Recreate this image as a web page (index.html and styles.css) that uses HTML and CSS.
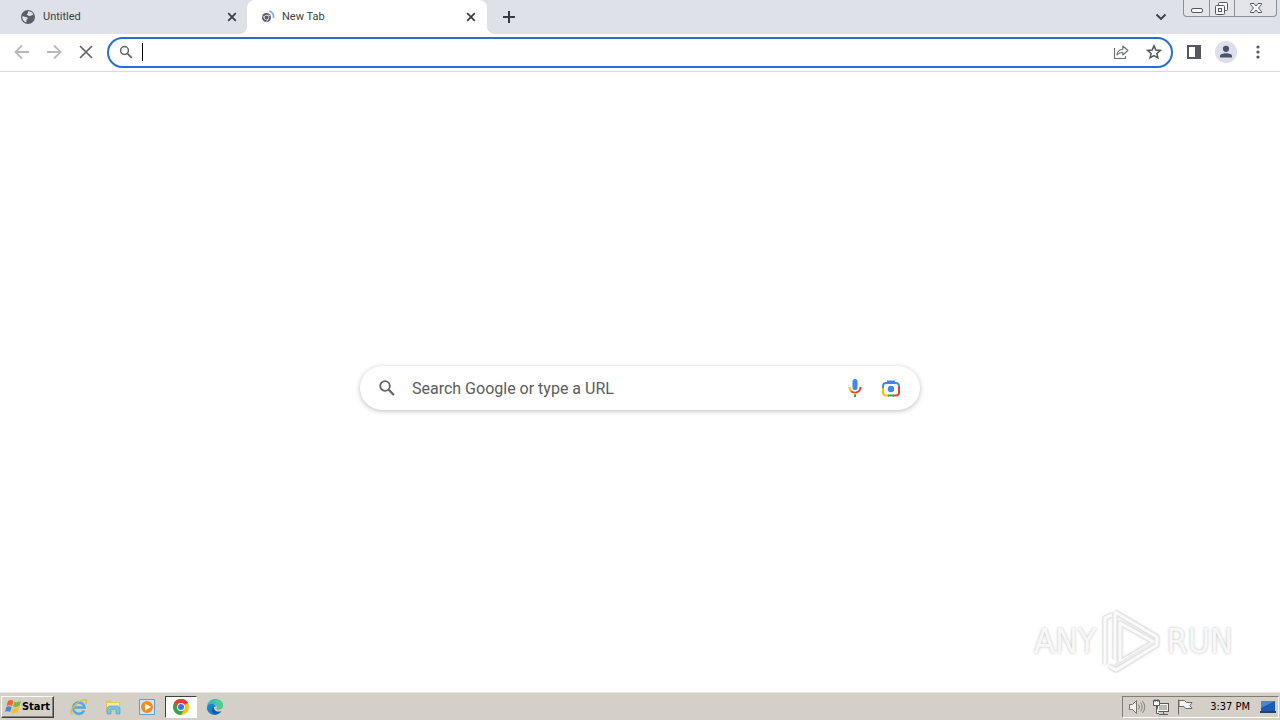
FILE: index.html
```html
<!DOCTYPE html>
<html lang="en">
<head>
<meta charset="utf-8">
<title>New Tab</title>
<link rel="stylesheet" href="styles.css">
</head>
<body>
<header class="tabstrip">
  <div class="tab">
    <svg class="favicon" width="16" height="16" viewBox="0 0 16 16"><circle cx="8" cy="8" r="7" fill="#5a5e66"/><path d="M2.2 7.2C4 7 5 8 6.6 8.2 8.4 8.5 8 10 6.6 10.4L6.3 13.3C3.8 12.8 2 10.5 2.2 7.2ZM8 2.2C10 2 12.4 3.2 13.4 5.4 12.3 6.5 10.7 6.3 9.7 7.2 8.6 6.7 7.2 6.6 6.8 5.6 7 4.7 8.3 4.9 8 2.2Z" fill="#dee1e8"/></svg>
    <span class="tab-title">Untitled</span>
    <button class="tab-close" aria-label="Close Untitled"><svg width="10" height="10" viewBox="0 0 10 10"><path d="M1.2 1.2L8.8 8.8M8.8 1.2L1.2 8.8" stroke="#3c4043" stroke-width="1.8"/></svg></button>
  </div>
  <div class="tab tab-active">
    <svg class="favicon" width="16" height="16" viewBox="0 0 16 16"><circle cx="6.500" cy="8.500" r="4.500" fill="#55595f"/><circle cx="6.500" cy="8.500" r="2.300" fill="none" stroke="#e8e9eb" stroke-width=".8"/><path d="M6.500 6.300H10.500M4.600 9.600L2.800 6.800M8.500 9.700L6.500 13" stroke="#e8e9eb" stroke-width=".8"/><path d="M9.500 2C12.500 3 14 5.200 13.600 9" fill="none" stroke="#80aaf0" stroke-width="1.800"/></svg>
    <span class="tab-title">New Tab</span>
    <button class="tab-close" aria-label="Close New Tab"><svg width="10" height="10" viewBox="0 0 10 10"><path d="M1.2 1.2L8.800 8.800M8.800 1.200L1.200 8.800" stroke="#3c4043" stroke-width="1.800"/></svg></button>
  </div>
  <button class="new-tab" aria-label="New tab"><svg width="14" height="14" viewBox="0 0 14 14"><path d="M7 1V13M1 7H13" stroke="#36393f" stroke-width="2"/></svg></button>
  <button class="tab-search" aria-label="Search tabs"><svg width="12" height="8" viewBox="0 0 12 8"><path d="M1.500 1.500L6 6L10.500 1.500" fill="none" stroke="#3c4043" stroke-width="1.900"/></svg></button>
  <div class="window-controls">
    <button class="wc" aria-label="Minimize"><svg width="24" height="16" viewBox="0 0 24 16"><rect x="6.500" y="8.500" width="11" height="4" rx="1.500" fill="#f8f8fa" stroke="#55595f"/></svg></button>
    <button class="wc" aria-label="Restore"><svg width="24" height="16" viewBox="0 0 24 16"><g fill="#f4f5f7" stroke="#55595f"><rect x="8.500" y="2.500" width="9" height="8" rx="1"/><rect x="5.500" y="5.500" width="9" height="9" rx="1"/><rect x="8.500" y="8.500" width="3" height="3"/></g></svg></button>
    <button class="wc wc-close" aria-label="Close"><svg width="40" height="16" viewBox="0 0 40 16"><path d="M14.500 3.500H18L20 6L22 3.500H25.500V4.500L22.500 8L25.500 11.500V12.500H22L20 10L18 12.500H14.500V11.500L17.500 8L14.500 4.500Z" fill="#f8f8fa" stroke="#55595f"/></svg></button>
  </div>
</header>
<nav class="toolbar">
  <button class="tool" aria-label="Back"><svg width="16" height="16" viewBox="0 0 16 16"><path d="M15 8H2M8 1.500L1.500 8L8 14.500" fill="none" stroke="#b7b9bc" stroke-width="1.800"/></svg></button>
  <button class="tool" aria-label="Forward"><svg width="16" height="16" viewBox="0 0 16 16"><path d="M1 8H14M8 1.500L14.500 8L8 14.500" fill="none" stroke="#b7b9bc" stroke-width="1.800"/></svg></button>
  <button class="tool" aria-label="Stop loading"><svg width="16" height="16" viewBox="0 0 16 16"><path d="M2 2L14 14M14 2L2 14" stroke="#5f6368" stroke-width="1.700"/></svg></button>
  <div class="omnibox">
    <svg width="14" height="14" viewBox="0 0 14 14"><circle cx="5.500" cy="5.500" r="3.900" fill="none" stroke="#5f6368" stroke-width="1.500"/><path d="M8.300 8.300L12.800 12.800" stroke="#5f6368" stroke-width="1.700"/></svg>
    <span class="caret"></span>
    <input class="address" type="text" aria-label="Address and search bar">
    <button class="tool" aria-label="Share"><svg width="16" height="16" viewBox="0 0 16 16"><path d="M1.500 4V14.500H12.500V12M4 11C4.500 7.500 6.500 5.500 9.800 5.300V2L15 6.500L9.800 11V8.200C7.500 8.200 5.800 8.900 4 11Z" fill="none" stroke="#6b6f75" stroke-width="1.100" stroke-linejoin="round"/></svg></button>
    <button class="tool" aria-label="Bookmark"><svg width="16" height="16" viewBox="0 0 16 16"><path d="M8 1.800L9.800 6L14.300 6.400L10.900 9.400L11.900 13.800L8 11.500L4.100 13.800L5.100 9.400L1.700 6.400L6.200 6Z" fill="none" stroke="#50545a" stroke-width="1.500"/></svg></button>
  </div>
  <button class="tool" aria-label="Side panel"><svg width="16" height="16" viewBox="0 0 16 16"><path d="M1 1H15V15H1ZM3 3V13H9V3Z" fill="#55585d" fill-rule="evenodd"/></svg></button>
  <button class="tool" aria-label="Profile"><svg width="22" height="22" viewBox="0 0 22 22"><circle cx="11" cy="11" r="11" fill="#dce0e6"/><circle cx="11" cy="7.800" r="3.100" fill="#49536b"/><path d="M5 16.500V15C5 11.200 17 11.200 17 15V16.500Z" fill="#49536b"/></svg></button>
  <button class="tool" aria-label="Menu"><svg width="16" height="16" viewBox="0 0 16 16"><g fill="#55585d"><circle cx="8" cy="3" r="1.600"/><circle cx="8" cy="8" r="1.600"/><circle cx="8" cy="13" r="1.600"/></g></svg></button>
</nav>
<main class="page">
  <form class="search">
    <svg width="18" height="18" viewBox="0 0 18 18"><circle cx="7" cy="7" r="4.800" fill="none" stroke="#5f6368" stroke-width="1.800"/><path d="M10.500 10.500L16 16" stroke="#5f6368" stroke-width="2.200"/></svg>
    <input class="search-input" type="text" placeholder="Search Google or type a URL" aria-label="Search Google or type a URL">
    <button class="search-icon" type="button" aria-label="Search by voice"><svg width="20" height="20" viewBox="0 0 20 20"><rect x="7.500" y="1" width="5" height="11" rx="2.500" fill="#4285f4"/><path d="M4.500 9C4.500 11.500 5.500 13 7 14" fill="none" stroke="#fbbc04" stroke-width="1.900"/><path d="M6.300 13.300C10 16.300 15.500 14.200 15.500 9" fill="none" stroke="#ea4335" stroke-width="1.900"/><path d="M10 15V19" stroke="#34a853" stroke-width="2"/><path d="M10 15V16.500" stroke="#fbbc04" stroke-width="2"/></svg></button>
    <button class="search-icon" type="button" aria-label="Search by image"><svg width="20" height="20" viewBox="0 0 20 20"><g fill="none" stroke-width="2"><path d="M2 11V8Q2 5 5 5H15Q17.500 5 18 8" stroke="#4285f4"/><path d="M6 3.500H14" stroke="#4285f4"/><path d="M2 10V14.500Q2 17.500 5 17.500H8" stroke="#fbbc04"/><path d="M7 17.500H13" stroke="#34a853"/><path d="M12 17.500H15Q18 17.500 18 14.500V8" stroke="#ea4335"/></g><circle cx="10" cy="11" r="3.200" fill="#4285f4"/></svg></button>
  </form>
  <div class="watermark">
    <span>ANY</span>
    <svg width="60" height="64" viewBox="0 0 60 64"><g fill="none" stroke-linejoin="round"><path d="M4 55V9L11 6M14 3L56 28V36L15 61L8 57M14 3V50M19 14L53 33L19 53Z" stroke="#e2e2e2" stroke-width="5"/><path d="M4 55V9L11 6M14 3L56 28V36L15 61L8 57M14 3V50M19 14L53 33L19 53Z" stroke="#fafafa" stroke-width="3"/><path d="M13 57L54 33" stroke="#ececec" stroke-width="2"/></g></svg>
    <span>RUN</span>
  </div>
</main>
<footer class="taskbar">
  <button class="start"><svg width="17" height="16" viewBox="0 0 17 16"><path d="M3 2Q6 0 8.500 2L7 7Q4.500 5.500 1.500 7Z" fill="#ef6234"/><path d="M9.500 2.500Q12 4 16 2L14.500 7Q11 9 8 7.500Z" fill="#80b83c"/><path d="M1.300 8Q4 6.500 6.700 8L5.200 13Q2.500 11.500 0 13Z" fill="#4489cd"/><path d="M7.700 8.500Q10.500 10 14.200 8L12.800 13Q9.500 15 6.300 13.500Z" fill="#f5bd32"/></svg><span>Start</span></button>
  <div class="pins">
    <button class="pin" aria-label="Internet Explorer"><svg width="18" height="18" viewBox="0 0 18 18"><path d="M14 12.500A5.700 5.700 0 1 1 14.500 9.500H5" fill="none" stroke="#4badde" stroke-width="2.700"/><path d="M3 15.500C-1 17 1 11 5.500 6.500S16 .5 16.500 2.500 15.500 6 15.500 6" fill="none" stroke="#e2b838" stroke-width="1.300"/></svg></button>
    <button class="pin" aria-label="File Explorer"><svg width="18" height="18" viewBox="0 0 18 18"><path d="M2 2.500L7 2L8 4H16V14H2Z" fill="#e6c65f"/><path d="M3 5H15V13H3Z" fill="#fbeaa5"/><path d="M3 16V10L5 8H14L16 10V16H12V12H7V16Z" fill="#78c3e5" stroke="#4a9bc4" stroke-width=".6"/></svg></button>
    <button class="pin" aria-label="Media Player"><svg width="18" height="18" viewBox="0 0 18 18"><path d="M1.500 1.500H16.500V16.500H1.500Z" fill="#d4e5f4" stroke="#5aa0d4"/><circle cx="9" cy="9" r="6" fill="#f28b22"/><path d="M7 5.500L13 9L7 12.500Z" fill="#fff"/></svg></button>
    <button class="pin pin-active" aria-label="Google Chrome"><svg width="18" height="18" viewBox="0 0 18 18"><circle cx="9" cy="9" r="8" fill="#fbc116"/><path d="M9 9L2.100 5A8 8 0 0 1 15.900 5Z" fill="#e34133"/><path d="M9 9L2.100 5A8 8 0 0 0 9 17L12.500 11Z" fill="#2da94f"/><path d="M2.100 5L5.500 11L9 5.300H16A8 8 0 0 0 2.100 5" fill="#e34133"/><circle cx="9" cy="9" r="4" fill="#fff"/><circle cx="9" cy="9" r="3" fill="#3478e5"/></svg></button>
    <button class="pin" aria-label="Microsoft Edge"><svg width="18" height="18" viewBox="0 0 18 18"><path d="M1 9C1-1.500 17-1.500 17 7.500C17 11 13 12.500 10.500 11C12 8.500 9.500 5.500 6 6C3.500 6 1.500 7.500 1 9Z" fill="#37bfc0"/><path d="M10 2C15 2 17 5 17 7.500C17 11 13 12.500 10.500 11C12 7 11 4 7 3Z" fill="#4fcf84"/><path d="M1 9C2 5 9 4.500 10 8.500C7 8.500 6 12 8 14.500C9 16 11 16.500 12.500 16.200C6 19 0 14 1 9Z" fill="#1684cf"/><path d="M8 9C7.500 12 10.500 14.500 15.500 13.300C12 18.500 4 16 6 10.500Z" fill="#155aa4"/></svg></button>
  </div>
  <div class="tray">
    <svg width="18" height="18" viewBox="0 0 18 18"><path d="M1.500 6.500H4.500L8.500 2.500V15.500L4.500 11.500H1.500Z" fill="#f4f4f2" stroke="#74736f"/><path d="M10.500 6.500Q12.500 9 10.500 11.500M12.500 4.500Q16 9 12.500 13.500M14.500 3Q19 9 14.500 15" fill="none" stroke="#85837f"/></svg>
    <svg width="18" height="18" viewBox="0 0 18 18"><rect x="5.500" y="5.500" width="11" height="8" fill="#b9b9b6" stroke="#5b5a57"/><path d="M6.500 6.500H15.500V12.500H6.500Z" fill="none" stroke="#f5f5f3"/><path d="M7 16.500H16M11.500 14V16" stroke="#5b5a57"/><path d="M1.500 2.500H7.500V7.500H1.500ZM3 1V4M6 1V4M4.500 8V15.500H7" fill="#fff" stroke="#5b5a57"/></svg>
    <svg width="18" height="18" viewBox="0 0 18 18"><path d="M2.500 1.500V16.500M3 2.500H8.500L10.500 4.500H16L14 7.500L16 10.500H9.500L8 8.500H3Z" fill="#f4f4f2" stroke="#6d6b67"/></svg>
    <time class="clock">3:37 PM</time>
    <svg width="16" height="14" viewBox="0 0 16 14"><path d="M1 1H15V11H1Z" fill="#195bb5"/><path d="M1 1H15L1 8Z" fill="#4488d1"/><path d="M0 11H16V13H0Z" fill="#26405f"/></svg>
  </div>
</footer>
</body>
</html>
```
FILE: styles.css
```css
* { box-sizing: border-box; }
body {
  margin: 0;
  min-height: 100vh;
  display: flex;
  flex-direction: column;
  background: #fff;
  font: 11px/16px "DejaVu Sans Condensed", "DejaVu Sans", sans-serif;
  color: #3c4043;
}
button { border: 0; padding: 0; background: none; color: inherit; font: inherit; display: flex; align-items: center; justify-content: center; }
input { border: 0; outline: 0; padding: 0; background: none; min-width: 0; font: inherit; }
svg { display: block; flex: none; }
.tabstrip { height: 34px; flex: none; display: flex; background: #dee1e8; }
.tab { width: 247px; height: 34px; display: flex; align-items: center; gap: 7px; padding: 0 10px 0 20px; }
.tab-active { width: 240px; position: relative; padding: 0 11px 0 13px; gap: 6px; background: #fff; border-radius: 8px 8px 0 0; }
.tab-active::before, .tab-active::after { content: ""; position: absolute; bottom: 0; width: 8px; height: 8px; }
.tab-active::before { right: 100%; background: radial-gradient(circle at 0 0, #dee1e8 8px, #fff 8px); }
.tab-active::after { left: 100%; background: radial-gradient(circle at 100% 0, #dee1e8 8px, #fff 8px); }
.tab-title { flex: 1; font-family: Roboto, sans-serif; }
.new-tab { width: 44px; }
.tab-search { width: 24px; margin-left: auto; margin-right: 10px; }
.window-controls { display: flex; height: 17px; margin-right: 3px; border: solid #8b8f98; border-width: 0 1px 1px; border-radius: 0 0 4px 4px; background: #e3e5eb; }
.wc { width: 25px; }
.wc + .wc { border-left: 1px solid #8b8f98; }
.wc-close { width: 42px; }
.toolbar { height: 38px; flex: none; display: flex; align-items: center; gap: 8px; padding: 0 10px 1px; border-bottom: 1px solid #d9dadd; }
.tool { width: 24px; height: 24px; flex: none; }
.omnibox { flex: 1; height: 31px; min-width: 0; display: flex; align-items: center; gap: 9px; margin: 0 1px; padding: 0 5px 0 10px; border: 2px solid #276fca; border-radius: 16px; }
.caret { width: 1px; height: 18px; background: #000; }
.address { flex: 1; }
.page { flex: 1; position: relative; display: flex; justify-content: center; align-items: flex-start; padding: 294px 20px 20px; }
.search { width: 560px; height: 44px; display: flex; align-items: center; gap: 16px; padding: 0 19px 0 18px; border-radius: 22px; box-shadow: 0 1px 5px #0004; }
.search-input { flex: 1; padding-top: 2px; font: 16px/20px Roboto, sans-serif; color: #555; }
.search-input::placeholder { color: #5b5c5e; opacity: 1; }
.search-icon { width: 20px; height: 20px; }
.watermark { position: absolute; right: 47px; bottom: 19px; display: flex; align-items: center; gap: 5px; font: 34px/60px "DejaVu Sans Condensed", sans-serif; color: #f8f8f8; text-shadow: 0 0 3px #bbb; }
.watermark svg { filter: drop-shadow(0 0 1px #ddd); }
.taskbar { height: 28px; flex: none; display: flex; align-items: center; padding: 1px 1px 0; background: #d4d0c8; border-top: 1px solid #e5e2dc; color: #000; }
.start { width: 53px; height: 22px; gap: 0; border: 1px solid; border-color: #fff #404040 #404040 #fff; box-shadow: inset -1px -1px #85827b; font-weight: bold; }
.pins { flex: 1; display: flex; gap: 2px; margin-left: 9px; }
.pin { width: 32px; height: 22px; }
.pin-active { background: #fff; border: 1px solid; border-color: #404040 #fff #fff #404040; }
.tray { height: 22px; display: flex; align-items: center; gap: 6px; padding: 0 2px 0 5px; border: 1px solid; border-color: #807d76 #fff #fff #807d76; }
.clock { margin: 0 4px 0 10px; }
```
